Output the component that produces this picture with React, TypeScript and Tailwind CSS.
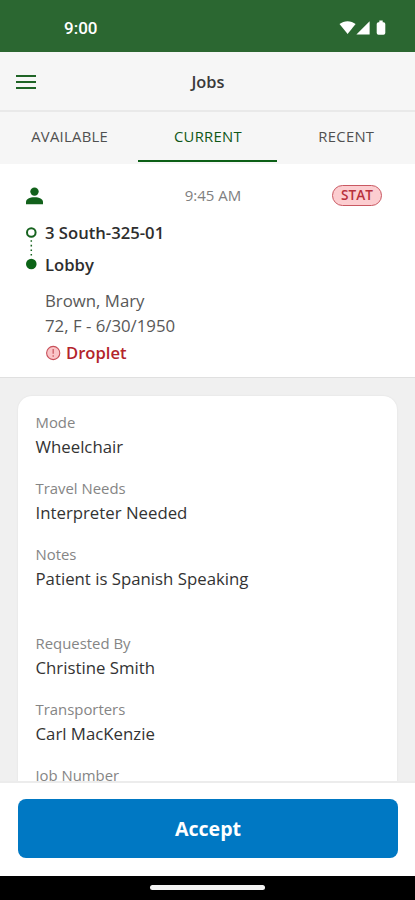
const tabs = [
  { label: "AVAILABLE", active: false },
  { label: "CURRENT", active: true },
  { label: "RECENT", active: false },
];

const details = [
  { label: "Mode", value: "Wheelchair" },
  { label: "Travel Needs", value: "Interpreter Needed" },
  { label: "Notes", value: "Patient is Spanish Speaking", last: true },
  { label: "Requested By", value: "Christine Smith" },
  { label: "Transporters", value: "Carl MacKenzie" },
  { label: "Job Number", value: "" },
];

function StatusBar() {
  return (
    <div className="flex h-[52px] shrink-0 items-center justify-between bg-[#2b6731] pt-[3px] pr-[28px] pl-[64px] text-white">
      <span className="font-['Roboto'] text-[17px] leading-5 font-medium">9:00</span>
      <svg width="48" height="16" viewBox="0 0 48 16" fill="currentColor">
        <path d="M0.5 4.1C4.9 .2 12.2 .2 16.6 4.1L8.6 14z" />
        <path d="M30.6 1.2v13.2H17.4z" />
        <path d="M39.5 2.2h.8V.6h3.4v1.6h.8q1.8 0 1.8 1.8v9q0 1.8-1.8 1.8h-5q-1.8 0-1.8-1.8V4q0-1.8 1.8-1.8z" />
      </svg>
    </div>
  );
}

function Header() {
  return (
    <header className="grid h-[60px] shrink-0 grid-cols-[1fr_auto_1fr] items-center border-b-2 border-[#e9e9e9] bg-[#f6f6f6] px-4">
      <button className="flex w-[20px] flex-col gap-[4px] pt-[1px]" aria-label="Menu">
        <span className="h-[2px] bg-[#1f6426]" />
        <span className="h-[2px] bg-[#1f6426]" />
        <span className="h-[2px] bg-[#1f6426]" />
      </button>
      <h1 className="pt-[2px] pl-[1px] text-[16.4px] leading-6 font-semibold text-[#3a3a3a]">Jobs</h1>
    </header>
  );
}

function Tabs() {
  return (
    <nav className="grid h-[52px] shrink-0 grid-cols-3 bg-[#f6f6f6]">
      {tabs.map((tab) => (
        <div
          key={tab.label}
          className={`flex flex-col items-center text-[14.8px] font-medium ${tab.active ? "text-[#0f5716]" : "text-[#505050]"}`}
        >
          <span className="pt-[13px] pl-[1px] leading-[22px] tracking-[0.3px]">{tab.label}</span>
          {tab.active && <span className="mt-[13px] h-[2px] w-full bg-[#0c5f16]" />}
        </div>
      ))}
    </nav>
  );
}

function JobSummary() {
  return (
    <section className="h-[214px] shrink-0 border-b border-[#e0e0e0] bg-white">
      <div className="grid h-[52px] grid-cols-[1fr_auto_1fr] items-center pt-[11px] pr-[33px] pl-[26px]">
        <svg width="17" height="18" viewBox="0 0 17 18" fill="#12611b">
          <circle cx="8.5" cy="4.6" r="4.2" />
          <path d="M0 17.3v-2.4C0 12 3.6 10.2 8.5 10.2S17 12 17 14.9v2.4z" />
        </svg>
        <span className="-mt-[2px] pl-[18px] text-[15px] leading-5 text-[#808080]">9:45 AM</span>
        <span className="flex h-[21px] w-[50px] items-center justify-center justify-self-end rounded-full border border-[#c95862] bg-[#fccdd0] text-[13.6px] font-semibold text-[#b8303b]">
          STAT
        </span>
      </div>

      {/* pickup -> destination */}
      <div className="flex gap-[8px] pt-[1px] pl-[26px] text-[16.65px] leading-[32px] font-semibold text-[#2e2e2e]">
        <svg width="11" height="64" viewBox="0 0 11 64" className="shrink-0">
          <circle cx="5.3" cy="15.5" r="4.3" fill="none" stroke="#17631f" strokeWidth="2" />
          <path d="M5.3 23.2v16" stroke="#17631f" strokeWidth="1.5" strokeDasharray="1.6 3" />
          <circle cx="5.3" cy="47" r="5.3" fill="#0c6417" />
        </svg>
        <div>
          <p>3 South-325-01</p>
          <p>Lobby</p>
        </div>
      </div>

      <div className="pt-[7px] pl-[45px] text-[16.8px] leading-[25px] text-[#585858]">
        <p>Brown, Mary</p>
        <p>72, F - 6/30/1950</p>
        <p className="flex items-center gap-[5px] pt-[2px] text-[16.6px] font-semibold text-[#b3242b]">
          <svg width="16" height="16" viewBox="0 0 16 16">
            <circle cx="8.2" cy="8" r="6.6" fill="#fac5c8" stroke="#c8505a" strokeWidth="1.1" />
            <path d="M8.2 4v4.8M8.2 10.3v1.5" stroke="#d0646c" strokeWidth="1.4" />
          </svg>
          Droplet
        </p>
      </div>
    </section>
  );
}

function JobDetails() {
  return (
    <div className="min-h-0 flex-1 overflow-hidden bg-[#f0f0f0] px-[18px] pt-[18px]">
      <dl className="h-[480px] rounded-t-[14px] bg-white px-[17.5px] pt-[14px] shadow-[0_0_2px_rgba(0,0,0,0.08)]">
        {details.map((item) => (
          <div key={item.label} className={item.last ? "mb-[41px]" : "mb-[18px]"}>
            <dt className="text-[14.9px] leading-6 text-[#858585]">{item.label}</dt>
            <dd className="h-6 pt-[1px] text-[16.8px] leading-6 text-[#333]">{item.value}</dd>
          </div>
        ))}
      </dl>
    </div>
  );
}

export default function App() {
  return (
    <div className="flex h-[900px] w-full flex-col overflow-hidden bg-white font-['Open_Sans','Noto_Sans',sans-serif]">
      <StatusBar />
      <Header />
      <Tabs />
      <JobSummary />
      <JobDetails />
      <footer className="shrink-0 border-t-2 border-[#ececec] bg-white px-[17.5px] pt-[16px] pb-[18px]">
        <button className="flex h-[59px] w-full items-center justify-center rounded-[8px] bg-[#0078c3] pt-[1px] pl-[1px] text-[19.6px] font-bold text-white">
          Accept
        </button>
      </footer>
      <div className="flex h-[24px] shrink-0 justify-center bg-black pt-[9px]">
        <span className="h-[5px] w-[115px] rounded-full bg-[#f4f4f4]" />
      </div>
    </div>
  );
}
